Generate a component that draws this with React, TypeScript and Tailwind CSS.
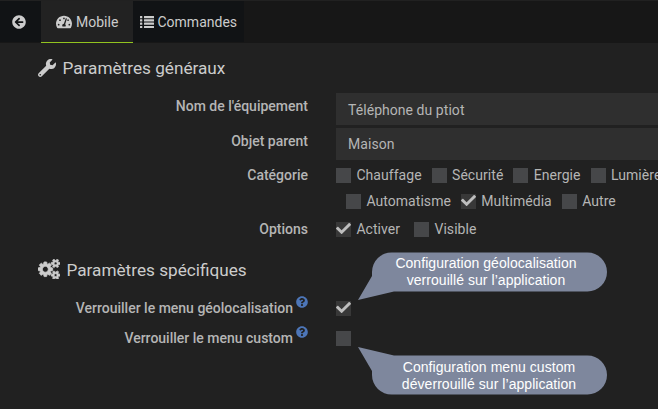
import type { ReactNode } from "react";
import {
  FaArrowCircleLeft,
  FaCheck,
  FaQuestionCircle,
  FaTachometerAlt,
  FaWrench,
} from "react-icons/fa";

const SMALL_GEAR =
  "v140q0 16-149 31-12 27-30 52 51 113 51 138 0 4-4 7-122 71-124 71-8 0-46-47t-52-68q-20 2-30 2t-30-2q-14 21-52 68t-46 47q-2 0-124-71-4-3-4-7 0-25 51-138-18-25-30-52-149-15-149-31v-140q0-16 149-31 13-29 30-52-51-113-51-138 0-4 4-7 4-2 35-20t59-34 30-16q8 0 46 46.500t52 67.500q20-2 30-2t30 2q51-71 92-112l6-2q4 0 124 70 4 3 4 7 0 25-51 138 17 23 30 52 149 15 149 31z";

function Cogs({ className }: { className: string }) {
  return (
    <svg className={className} viewBox="0 0 1920 1792" fill="currentColor" stroke="currentColor" strokeWidth="70">
      <path
        d={`M896 896q0-106-75-181t-181-75-181 75-75 181 75 181 181 75 181-75 75-181zm768 512q0-52-38-90t-90-38-90 38-38 90q0 53 37.500 90.500t90.500 37.500 90.500-37.500 37.500-90.500zm0-1024q0-52-38-90t-90-38-90 38-38 90q0 53 37.500 90.500t90.500 37.500 90.500-37.500 37.500-90.500zm-384 421v185q0 10-7 19.500t-16 10.500l-155 24q-11 35-32 76 34 48 90 115 7 11 7 20 0 12-7 19-23 30-82.500 89.500t-78.500 59.500q-11 0-21-7l-115-90q-37 19-77 31-11 108-23 155-7 24-30 24h-186q-11 0-20-7.500t-10-17.500l-23-153q-34-10-75-31l-118 89q-7 7-20 7-11 0-21-8-144-133-144-160 0-9 7-19 10-14 41-53t47-61q-23-44-35-82l-152-24q-10-1-17-9.500t-7-19.500v-185q0-10 7-19.500t16-10.500l155-24q11-35 32-76-34-48-90-115-7-11-7-20 0-12 7-20 22-30 82-89t79-59q11 0 21 7l115 90q34-18 77-32 11-108 23-154 7-24 30-24h186q11 0 20 7.500t10 17.500l23 153q34 10 75 31l118-89q8-7 20-7 11 0 21 8 144 133 144 160 0 8-7 19-12 16-42 54t-45 60q23 48 34 82l152 23q10 2 17 10.500t7 19.500zM1920 1338${SMALL_GEAR}M1920 314${SMALL_GEAR}`}
      />
    </svg>
  );
}

function ListIcon({ className }: { className: string }) {
  return (
    <svg className={className} viewBox="0 0 14 14" fill="currentColor">
      {[1, 4.3, 7.6, 10.9].map((y) => (
        <g key={y}>
          <rect x="0" y={y} width="2.300" height="2.200" rx="0.300" />
          <rect x="4" y={y} width="10" height="2.200" rx="0.300" />
        </g>
      ))}
    </svg>
  );
}

function Box({ checked = false }: { checked?: boolean }) {
  return (
    <span
      className={`flex h-[15px] w-[15px] shrink-0 items-center justify-center ${
        checked ? "bg-[#383838]" : "bg-[#464749]"
      }`}
    >
      {checked && <FaCheck className="mb-px h-[15px] w-[15px] shrink-0 text-[#bebebe]" />}
    </span>
  );
}

function Check({ label, checked }: { label: string; checked?: boolean }) {
  return (
    <label className="flex shrink-0 items-center gap-[5.400px] whitespace-nowrap">
      <Box checked={checked} />
      <span>{label}</span>
    </label>
  );
}

function Row({ label, help, className, children }: { label: string; help?: boolean; className: string; children: ReactNode }) {
  return (
    <div className={`flex ${className}`}>
      <div className="flex h-5 w-[308px] shrink-0 justify-end whitespace-nowrap font-medium leading-5 tracking-normal">
        {label}
        {help && <FaQuestionCircle className="-mt-[2px] ml-[3px] h-3 w-3 text-[#4d76b8]" />}
      </div>
      <div className="ml-[28px] min-w-0 flex-1">{children}</div>
    </div>
  );
}

function Bubble({ lines, up, className }: { lines: string[]; up?: boolean; className: string }) {
  return (
    <div className={`absolute left-[357px] h-[50px] w-[251px] ${className}`}>
      <svg className="absolute inset-0" width="251" height="50" viewBox="0 0 251 50">
        <path
          fill="#7e879d"
          transform={up ? "translate(0 50) scale(1 -1)" : undefined}
          d="M35 1.500H230.500A19.500 19.500 0 0 1 230.500 40.500H37L1 49L15 25V21A19.500 19.500 0 0 1 35 1.500Z"
        />
      </svg>
      <div
        className={`absolute w-[235px] text-center font-['Liberation_Sans',Arial,sans-serif] text-[14px] leading-[17px] tracking-[0.05px] text-white ${
          up ? "left-[14.500px] top-[13px]" : "left-[11.500px] top-[4px]"
        }`}
      >
        {lines.map((line) => (
          <div key={line}>{line}</div>
        ))}
      </div>
    </div>
  );
}

export default function App() {
  return (
    <main className="relative h-[409px] w-[658px] overflow-hidden bg-[#212121] font-[Roboto,sans-serif] text-[14px] tracking-[0.05px] text-[#b5b5b5]">
      <nav className="flex h-[43px] border-t border-[#212121] bg-[#171717] text-[#cccccc]">
        <div className="flex h-[41px] w-[41px] items-center bg-[#111315] pl-3">
          <FaArrowCircleLeft className="h-[14px] w-[14px]" />
        </div>
        <div className="flex h-[42px] w-[92px] items-center border-b border-[#92c41f] bg-[#222222] pl-[15px]">
          <FaTachometerAlt className="h-[16px] w-[16px]" />
          <span className="ml-1 mt-[2px] tracking-normal">Mobile</span>
        </div>
        <div className="flex h-[41px] w-[111px] items-center bg-[#111315] pl-[7px]">
          <ListIcon className="h-[14px] w-[14px]" />
          <span className="ml-[3.500px] mt-[2px] tracking-normal">Commandes</span>
        </div>
      </nav>
      <section>
        <h2 className="flex h-[50px] items-center pl-[38px] text-[17.200px] text-[#cccccc]">
          <FaWrench className="mb-px h-[18px] w-[18px]" />
          <span className="ml-[6.500px] mt-[2px] tracking-normal">Paramètres généraux</span>
        </h2>
        <Row label="Nom de l'équipement" className="h-[35px] pt-[3px]">
          <div className="-mt-[3px] flex h-8 items-center bg-[#2f2f2f] pl-3 pt-[2px]">Téléphone du ptiot</div>
        </Row>
        <Row label="Objet parent" className="h-[35px] pt-[3px]">
          <div className="-mt-[3px] flex h-8 items-center bg-[#2f2f2f] pl-3">Maison</div>
        </Row>
        <Row label="Catégorie" className="h-[55px] pt-[2px]">
          <div className="flex h-5 items-center gap-[10px]">
            <Check label="Chauffage" />
            <Check label="Sécurité" />
            <Check label="Energie" />
            <Check label="Lumière" />
          </div>
          <div className="mt-[6px] flex h-5 items-center gap-[10px] pl-[10px]">
            <Check label="Automatisme" />
            <Check label="Multimédia" checked />
            <Check label="Autre" />
          </div>
        </Row>
        <Row label="Options" className="h-[30px] pt-[1px]">
          <div className="flex h-5 items-center gap-[14px]">
            <Check label="Activer" checked />
            <Check label="Visible" />
          </div>
        </Row>
      </section>
      <section>
        <h2 className="flex h-[44px] items-center pl-[38px] text-[17.200px] text-[#cccccc]">
          <Cogs className="mb-[2px] h-[20.500px] w-[22px]" />
          <span className="ml-[6.500px] mt-[2px] tracking-normal">Paramètres spécifiques</span>
        </h2>
        <Row label="Verrouiller le menu géolocalisation" help className="h-[30px] pt-[6px]">
          <div className="flex h-5 items-center"><Box checked /></div>
        </Row>
        <Row label="Verrouiller le menu custom" help className="h-[30px] pt-[6px]">
          <div className="flex h-5 items-center"><Box /></div>
        </Row>
      </section>
      <Bubble className="top-[251px]" lines={["Configuration géolocalisation", "verrouillé sur l’application"]} />
      <Bubble className="top-[346px]" up lines={["Configuration menu custom", "déverrouillé sur l’application"]} />
    </main>
  );
}
